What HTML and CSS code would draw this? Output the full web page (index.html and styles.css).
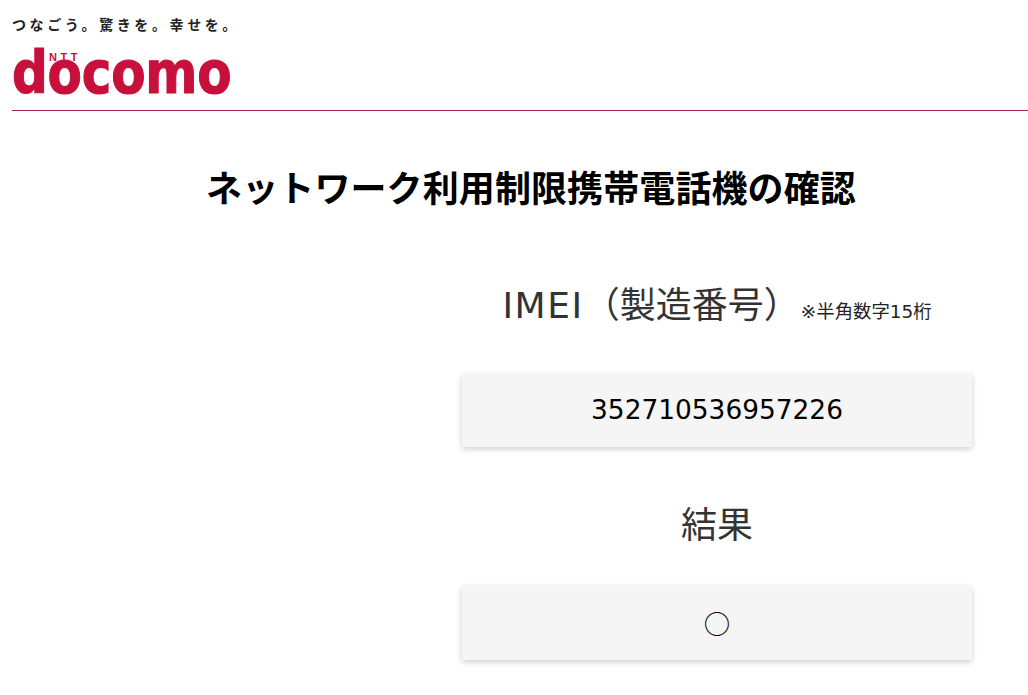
FILE: index.html

```html
<!DOCTYPE html>
<html lang="ja">
<head>
    <meta charset="UTF-8">
    <meta name="viewport" content="width=device-width, initial-scale=1.0">
    <title>ネットワーク利用制限携帯電話機の確認</title>
    <link rel="stylesheet" href="styles.css">
</head>
<body>
    <header class="site-header">
        <p class="tagline">つなごう。驚きを。幸せを。</p>
        <div class="logo">
            <span class="logo-ntt">NTT</span>
            <span class="logo-word">docomo</span>
        </div>
    </header>
    <main>
        <h1 class="page-title">ネットワーク利用制限携帯電話機の確認</h1>
        <section class="result-form">
            <div class="field-label imei-label"><span class="imei-latin">IMEI</span>（製造番号）<small class="field-note">※半角数字15桁</small></div>
            <div class="field-box">352710536957226</div>
            <div class="field-label result-label">結果</div>
            <div class="field-box result-box">○</div>
        </section>
    </main>
</body>
</html>
```

FILE: styles.css

```css
body {
    font-family: "DejaVu Sans", "Noto Sans CJK JP", sans-serif;
    background-color: #fff;
    color: #333;
    margin: 0;
    padding: 0 0 34px 12px;
}
.site-header {
    height: 110px;
    border-bottom: 1px solid #a32a4c;
}
.tagline {
    margin: 0;
    padding-top: 14px;
    font-family: "Noto Sans CJK JP", sans-serif;
    font-size: 14px;
    line-height: 20px;
    font-weight: 700;
    letter-spacing: 3.6px;
    color: #222;
}
.logo {
    position: relative;
    height: 62px;
    margin-top: 8px;
    color: #c8103c;
}
.logo-ntt {
    position: absolute;
    left: 37px;
    top: 10px;
    font-family: "Liberation Sans", sans-serif;
    font-size: 11px;
    line-height: 11px;
    font-weight: 700;
    letter-spacing: 3.5px;
}
.logo-word {
    display: block;
    width: max-content;
    padding-top: 6px;
    font-family: "DejaVu Sans", sans-serif;
    font-size: 50px;
    line-height: 56px;
    font-weight: 700;
    letter-spacing: -0.2px;
    -webkit-text-stroke: 1px #c8103c;
    transform: scaleY(1.16);
    transform-origin: 0 48px;
}
.page-title {
    margin: 52px 0 0;
    padding-left: 22px;
    text-align: center;
    font-family: "Noto Sans CJK JP", sans-serif;
    font-size: 36px;
    line-height: 46px;
    font-weight: 700;
    letter-spacing: 0.1px;
    color: #000;
}
.result-form {
    width: 510px;
    margin: 0 0 0 450px;
    text-align: center;
}
.field-label {
    font-size: 36px;
    line-height: 50px;
    white-space: nowrap;
}
.imei-label {
    margin-top: 72px;
}
.imei-latin {
    letter-spacing: 1.6px;
}
.result-label {
    margin-top: 54px;
}
.field-note {
    margin-left: 1px;
    font-size: 18.4px;
    color: #222;
}
.field-box {
    display: flex;
    align-items: center;
    justify-content: center;
    height: 73px;
    margin-top: 37px;
    padding-bottom: 3px;
    box-sizing: border-box;
    background: #f5f5f5;
    box-shadow: 0 2px 6px rgba(0, 0, 0, 0.2);
    font-size: 26.4px;
    color: #000;
}
.result-box {
    height: 74px;
    margin-top: 35px;
    padding-bottom: 1px;
    font-family: "Noto Sans CJK JP", sans-serif;
}
```
